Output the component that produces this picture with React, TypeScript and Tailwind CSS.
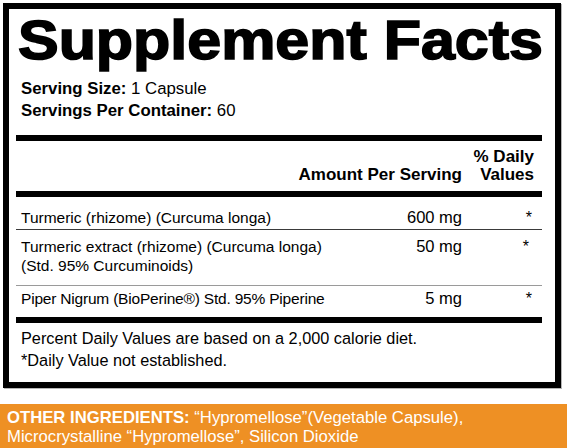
import React from "react";

export default function App() {
  return (
    <div
      className="w-[567px] h-[448px] bg-white text-black overflow-hidden"
      style={{ fontFamily: '"Liberation Sans", Arial, sans-serif' }}
    >
      <div className="pt-[3px] pl-[3px]">
        <div className="w-[558px] border-[6px] border-black pl-[7px] pr-[13px] shadow-[1px_1px_0_#b5b5b5]">
          {/* Title */}
          <div className="pt-[4px] h-[59px]">
            <div className="inline-block ml-[2px] origin-left scale-x-[1.108] text-[55px] leading-[55px] font-bold [-webkit-text-stroke:1.6px_black] whitespace-nowrap">
              Supplement Facts
            </div>
          </div>
          {/* Serving */}
          <div className="mt-[10px] pl-[5px] text-[16.8px] leading-[22px] whitespace-nowrap">
            <div>
              <span className="font-bold">Serving Size:</span> 1 Capsule
            </div>
            <div>
              <span className="font-bold">Servings Per Container:</span> 60
            </div>
          </div>
          <div className="mt-[13px] h-[6px] bg-black" />
          {/* Header */}
          <div className="flex items-end pt-[7px] pb-[7px] text-[17px] leading-[18px] font-bold whitespace-nowrap">
            <div className="flex-1" />
            <div className="text-right">Amount Per Serving</div>
            <div className="w-[80px] text-right pr-[8px]">
              <div>% Daily</div>
              <div>Values</div>
            </div>
          </div>
          <div className="h-[6px] bg-black" />
          {/* Row 1 */}
          <div className="flex items-baseline pl-[5px] pt-[11px] pb-[2px] leading-[18px] whitespace-nowrap">
            <div className="flex-1 text-[15.5px]">Turmeric (rhizome) (Curcuma longa)</div>
            <div className="text-right text-[16.5px]">600 mg</div>
            <div className="w-[80px] text-right pr-[10px] text-[16px]">*</div>
          </div>
          <div className="h-px bg-[#3a3a3a]" />
          {/* Row 2 */}
          <div className="flex items-baseline pl-[5px] pt-[7px] pb-[10px] leading-[19px] whitespace-nowrap">
            <div className="flex-1 text-[15.5px]">
              <div>Turmeric extract (rhizome) (Curcuma longa)</div>
              <div>(Std. 95% Curcuminoids)</div>
            </div>
            <div className="text-right text-[16.5px]">50 mg</div>
            <div className="w-[80px] text-right pr-[13px] text-[16px]">*</div>
          </div>
          <div className="h-px bg-[#9a9a9a]" />
          {/* Row 3 */}
          <div className="flex items-baseline pl-[5px] pt-[3px] pb-[9px] leading-[18px] whitespace-nowrap">
            <div className="flex-1 text-[15.5px] tracking-[-0.2px]">Piper Nigrum (BioPerine®) Std. 95% Piperine</div>
            <div className="text-right text-[16.5px]">5 mg</div>
            <div className="w-[80px] text-right pr-[10px] text-[16px]">*</div>
          </div>
          <div className="h-[6px] bg-black" />
          {/* Footer */}
          <div className="pl-[5px] pt-[4px] pb-[11px] text-[16.3px] leading-[22px] whitespace-nowrap">
            <div>Percent Daily Values are based on a 2,000 calorie diet.</div>
            <div>*Daily Value not established.</div>
          </div>
        </div>
      </div>
      {/* Other ingredients */}
      <div className="mt-[16px] h-[46px] bg-[#ee9024] text-white pl-[7px] pt-[4px] text-[16.7px] leading-[19px] whitespace-nowrap">
        <div>
          <span className="font-bold">OTHER INGREDIENTS:</span> “Hypromellose”(Vegetable Capsule),
        </div>
        <div>Microcrystalline “Hypromellose”, Silicon Dioxide</div>
      </div>
    </div>
  );
}
